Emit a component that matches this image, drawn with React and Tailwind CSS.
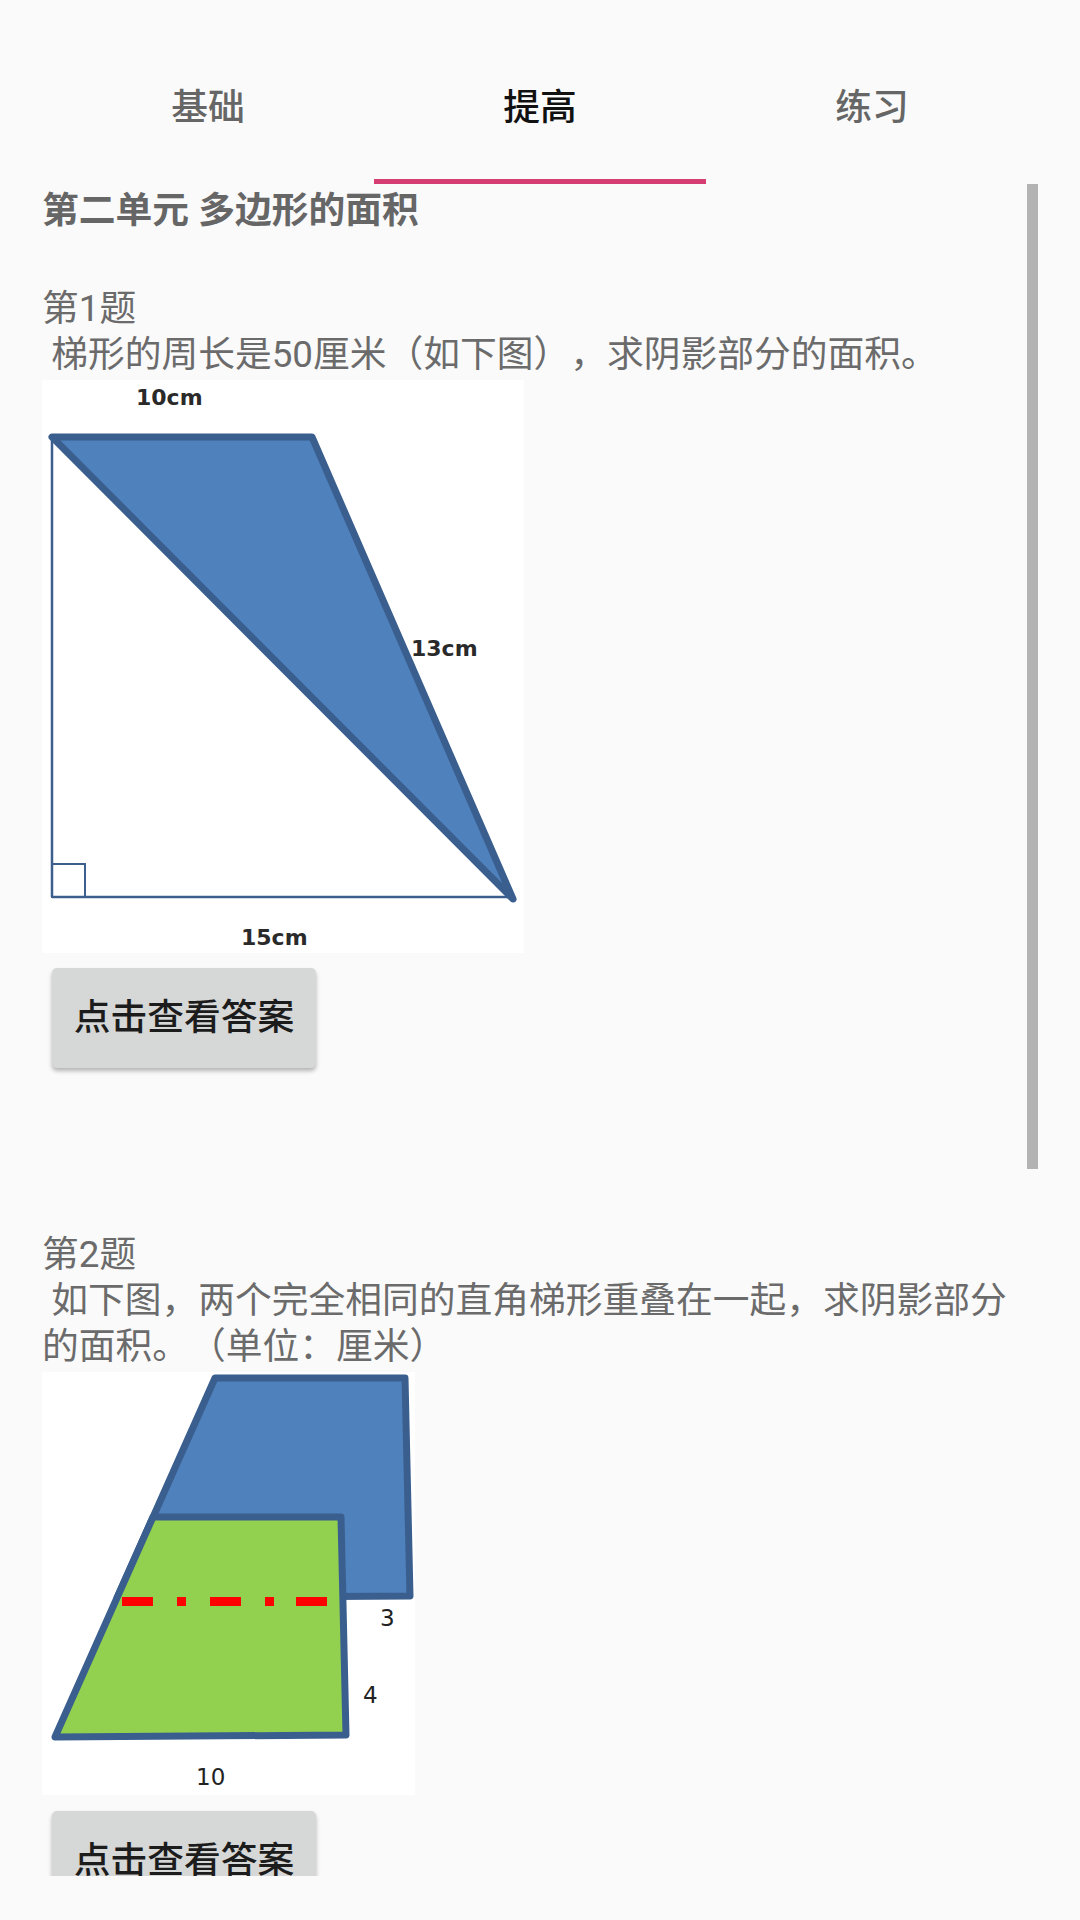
import React, { useState } from 'react';

const FONT = { fontFamily: 'Roboto, "Noto Sans CJK SC", sans-serif' };
const LABEL = 'DejaVu Sans, Verdana, sans-serif';

function Figure1() {
    return (
        <svg width="482" height="573" viewBox="0 0 482 573" className="block bg-white">
            <rect x="0" y="0" width="482" height="573" fill="#ffffff" />
            <line x1="10" y1="57" x2="10" y2="517" stroke="#3d5f8e" strokeWidth="2.5" />
            <line x1="10" y1="517" x2="471" y2="517" stroke="#3d5f8e" strokeWidth="2.5" />
            <rect x="10" y="484" width="33" height="33" fill="none" stroke="#3d5f8e" strokeWidth="2" />
            <polygon
                points="10,57 270,57 471,519"
                fill="#4f81bd"
                stroke="#3a5f8e"
                strokeWidth="7"
                strokeLinejoin="round"
            />
            <text x="94" y="25" fontFamily={LABEL} fontWeight="bold" fontSize="22" fill="#2a2a2a">10cm</text>
            <text x="369" y="276" fontFamily={LABEL} fontWeight="bold" fontSize="22" fill="#2a2a2a">13cm</text>
            <text x="199" y="565" fontFamily={LABEL} fontWeight="bold" fontSize="22" fill="#2a2a2a">15cm</text>
        </svg>
    );
}

function Figure2() {
    return (
        <svg width="373" height="423" viewBox="0 0 373 423" className="block bg-white">
            <rect x="0" y="0" width="373" height="423" fill="#ffffff" />
            <polygon
                points="173,6 363,6 368,224 75,226"
                fill="#4f81bd"
                stroke="#3a5f8e"
                strokeWidth="7"
                strokeLinejoin="round"
            />
            <polygon
                points="111,145 299,145 304,363 13,365"
                fill="#92d050"
                stroke="#3a5f8e"
                strokeWidth="7"
                strokeLinejoin="round"
            />
            {/* dash-dot line */}
            <g fill="#ff0000">
                <rect x="80" y="225" width="31" height="9" />
                <rect x="135" y="225" width="9" height="9" />
                <rect x="168" y="225" width="31" height="9" />
                <rect x="223" y="225" width="9" height="9" />
                <rect x="254" y="225" width="31" height="9" />
            </g>
            <text x="338" y="254" fontFamily={LABEL} fontSize="23" fill="#222">3</text>
            <text x="321" y="331" fontFamily={LABEL} fontSize="23" fill="#222">4</text>
            <text x="154" y="413" fontFamily={LABEL} fontSize="23" fill="#222">10</text>
        </svg>
    );
}

function AnswerButton({ className = '' }) {
    return (
        <button
            className={`ml-[10px] w-[264px] h-[100px] flex items-center justify-center rounded-[5px] bg-[#d6d7d7] text-[#1c1c1c] text-[36.75px] font-medium shadow-[0_3px_4px_rgba(0,0,0,0.28)] shrink-0 ${className}`}
        >
            点击查看答案
        </button>
    );
}

export default function App() {
    const [tab, setTab] = useState(1);
    const tabs = ['基础', '提高', '练习'];

    return (
        <div className="w-[1080px] h-[1920px] bg-[#fafafa] overflow-hidden flex flex-col [text-spacing-trim:space-all]" style={FONT}>
            {/* Tabs */}
            <div className="grid grid-cols-3 px-[42px] pt-[85px] shrink-0">
                {tabs.map((t, i) => (
                    <button key={t} onClick={() => setTab(i)} className="flex flex-col items-center">
                        <span
                            className={`leading-[45px] text-[36.75px] font-medium ${tab === i ? 'text-[#111111]' : 'text-[#666666]'}`}
                        >
                            {t}
                        </span>
                        <span className={`mt-[49px] h-[5px] w-full ${tab === i ? 'bg-[#d63e73]' : 'bg-transparent'}`} />
                    </button>
                ))}
            </div>

            {/* Scroll content */}
            <div className="relative h-[1692px] overflow-hidden shrink-0">
                <div className="pl-[42px] w-[1022px] pt-[4px] text-[36.75px] leading-[46px] text-[#6b6b6b] [text-spacing-trim:space-all]">
                    <div className="font-bold text-[#666666]">第二单元 多边形的面积</div>

                    <div className="mt-[52px]">第1题</div>
                    <div className="whitespace-pre-wrap">{' 梯形的周长是50厘米（如下图），求阴影部分的面积。'}</div>
                    <div className="mt-[2px]">
                        <Figure1 />
                    </div>
                    <AnswerButton className="mt-[15px]" />

                    <div className="mt-[164px]">第2题</div>
                    <div className="whitespace-pre-wrap">{' 如下图，两个完全相同的直角梯形重叠在一起，求阴影部分的面积。（单位：厘米）'}</div>
                    <div className="mt-[2px]">
                        <Figure2 />
                    </div>
                    <AnswerButton className="mt-[16px]" />
                </div>

                {/* scrollbar thumb */}
                <div className="absolute top-0 right-[42px] w-[11px] h-[985px] bg-[#b3b3b3]" />
            </div>
        </div>
    );
}
